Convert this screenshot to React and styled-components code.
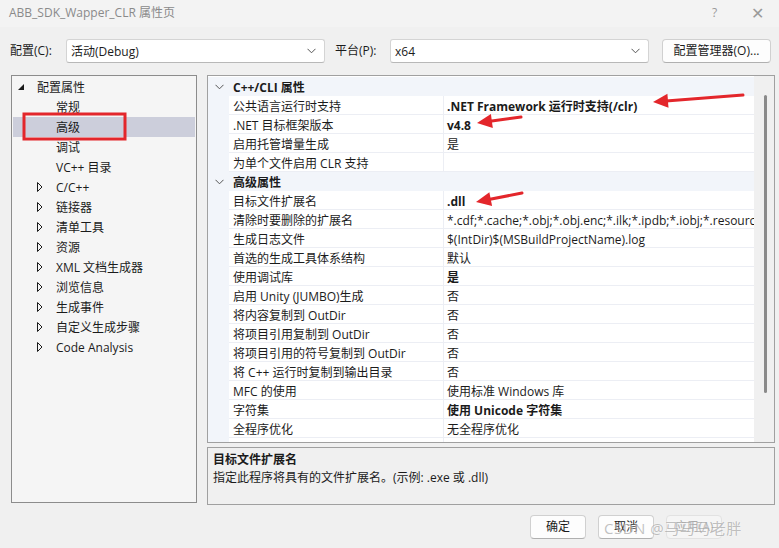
import React from 'react'
import styled, { createGlobalStyle, css } from 'styled-components'

const GlobalStyle = createGlobalStyle`
    html, body {
        margin: 0;
        padding: 0;
        background: #f0f0f0;
    }
    body {
        font-family: 'Segoe UI', 'Open Sans', 'Noto Sans CJK SC', sans-serif;
        font-size: 12px;
        color: #1b1b1b;
    }
`

const Window = styled.div`
    position: relative;
    width: 779px;
    height: 548px;
    background: #f0f0f0;
    overflow: hidden;
`

const TitleBar = styled.div`
    height: 27px;
    display: flex;
    align-items: center;
    padding: 0 0 2px 9px;
    box-sizing: border-box;
    background: #f3f3f3;
    color: #8a8a8a;
    font-size: 12px;
`

const TitleText = styled.div`
    flex: 1;
    line-height: 16px;
`

const TitleButton = styled.div`
    width: 43px;
    text-align: center;
    color: #9a9a9a;
    font-size: ${(p) => (p.$big ? '16px' : '12px')};
    line-height: 16px;
`

const Toolbar = styled.div`
    height: 48px;
    display: flex;
    align-items: center;
    padding-left: 10px;
`

const Label = styled.div`
    width: ${(p) => p.$w}px;
    line-height: 16px;
`

const Combo = styled.div`
    width: 259px;
    height: 24px;
    box-sizing: border-box;
    display: flex;
    align-items: center;
    justify-content: space-between;
    padding: 0 8px 0 4px;
    background: #ffffff;
    border: 1px solid #d4d4d4;
    border-bottom-color: #b8b8b8;
    border-radius: 3px;
    margin-right: ${(p) => p.$mr}px;
`

const Chevron = styled.svg`
    width: 9px;
    height: 6px;
    flex: none;
`

const PushButton = styled.div`
    height: 24px;
    box-sizing: border-box;
    width: ${(p) => p.$w}px;
    display: flex;
    align-items: center;
    justify-content: center;
    border: 1px solid ${(p) => (p.$disabled ? '#e2e2e2' : '#d0d0d0')};
    border-bottom-color: ${(p) => (p.$disabled ? '#e2e2e2' : '#b0b0b0')};
    border-radius: 4px;
    background: ${(p) => (p.$disabled ? '#f5f5f5' : '#fdfdfd')};
    color: ${(p) => (p.$disabled ? '#a8a8a8' : '#1b1b1b')};
    line-height: 16px;
`

const Main = styled.div`
    display: flex;
    gap: 10px;
    padding-left: 11px;
    height: 430px;
`

const Tree = styled.div`
    width: 186px;
    height: 428px;
    box-sizing: border-box;
    border: 1px solid #8c8c8c;
    background: #f5f5f5;
    padding: 1px;
`

const TreeRow = styled.div`
    height: 20px;
    box-sizing: border-box;
    display: flex;
    align-items: center;
    padding: 2px 0 0 ${(p) => 5 + p.$level * 19}px;
    background: ${(p) => (p.$selected ? '#cccedb' : 'transparent')};
`

const Expander = styled.div`
    width: 19px;
    flex: none;
    display: flex;
    align-items: center;
    margin-top: -2px;
`

const TreeLabel = styled.div`
    line-height: 16px;
    white-space: nowrap;
`

const RightCol = styled.div`
    width: 568px;
    display: flex;
    flex-direction: column;
    gap: 4px;
`

const Grid = styled.div`
    height: 368px;
    box-sizing: border-box;
    border: 1px solid #a0a0a0;
    display: flex;
    overflow: hidden;
    background: #ffffff;
`

const Rows = styled.div`
    flex: 1;
    padding-top: 1px;
    overflow: hidden;
`

const Row = styled.div`
    height: 19px;
    box-sizing: border-box;
    display: grid;
    grid-template-columns: 21px 215px 1fr;
    grid-template-rows: 19px;
    ${(p) =>
        p.$category
            ? css`
                  background: #f2f5fa;
              `
            : css`
                  background: #ffffff;
              `}
`

const Gutter = styled.div`
    background: #f2f5fa;
    display: flex;
    align-items: center;
    justify-content: center;
    padding-left: 2px;
`

const CategoryText = styled.div`
    grid-column: 2 / 4;
    padding: 3px 0 0 4px;
    font-weight: 700;
    line-height: 16px;
`

const NameCell = styled.div`
    padding: 3px 0 0 4px;
    box-sizing: border-box;
    border-right: 1px solid #eceef4;
    border-bottom: 1px solid #eceef4;
    line-height: 15px;
    white-space: nowrap;
    overflow: hidden;
`

const ValueCell = styled.div`
    padding: 3px 0 0 3px;
    box-sizing: border-box;
    border-bottom: 1px solid #eceef4;
    line-height: 15px;
    white-space: nowrap;
    overflow: hidden;
    font-weight: ${(p) => (p.$bold ? 700 : 400)};
`

const ScrollTrack = styled.div`
    width: 20px;
    flex: none;
    background: #f0f0f0;
    padding-top: 19px;
    display: flex;
    justify-content: center;
    box-sizing: border-box;
`

const ScrollThumb = styled.div`
    width: 3px;
    height: 298px;
    margin-left: 2px;
    border-radius: 2px;
    background: #8a8a8a;
`

const Desc = styled.div`
    height: 58px;
    box-sizing: border-box;
    border: 1px solid #a0a0a0;
    background: #f0f0f0;
    padding: 3px 5px;
`

const DescTitle = styled.div`
    font-weight: 700;
    line-height: 18px;
`

const DescText = styled.div`
    line-height: 18px;
`

const Footer = styled.div`
    display: flex;
    justify-content: flex-end;
    gap: 12px;
    padding: 10px 57px 0 0;
`

const Overlay = styled.svg`
    position: absolute;
    top: 0;
    left: 0;
    width: 779px;
    height: 548px;
    pointer-events: none;
`

const Watermark = styled.div`
    position: absolute;
    left: 604px;
    top: 518px;
    font-size: 15px;
    line-height: 20px;
    color: rgba(140, 140, 140, 0.55);
    text-shadow: 0 0 2px rgba(255, 255, 255, 0.9);
    white-space: nowrap;
    letter-spacing: 0.5px;
    pointer-events: none;
`

const tree = [
    { label: '配置属性', level: 0, open: true },
    { label: '常规', level: 1 },
    { label: '高级', level: 1, selected: true },
    { label: '调试', level: 1 },
    { label: 'VC++ 目录', level: 1 },
    { label: 'C/C++', level: 1, closed: true },
    { label: '链接器', level: 1, closed: true },
    { label: '清单工具', level: 1, closed: true },
    { label: '资源', level: 1, closed: true },
    { label: 'XML 文档生成器', level: 1, closed: true },
    { label: '浏览信息', level: 1, closed: true },
    { label: '生成事件', level: 1, closed: true },
    { label: '自定义生成步骤', level: 1, closed: true },
    { label: 'Code Analysis', level: 1, closed: true },
]

const rows = [
    { cat: 'C++/CLI 属性' },
    { name: '公共语言运行时支持', value: '.NET Framework 运行时支持(/clr)', bold: true },
    { name: '.NET 目标框架版本', value: 'v4.8', bold: true },
    { name: '启用托管增量生成', value: '是' },
    { name: '为单个文件启用 CLR 支持', value: '' },
    { cat: '高级属性' },
    { name: '目标文件扩展名', value: '.dll', bold: true },
    { name: '清除时要删除的扩展名', value: '*.cdf;*.cache;*.obj;*.obj.enc;*.ilk;*.ipdb;*.iobj;*.resources;*.tlb;*.tli;*.tlh;*.tmp' },
    { name: '生成日志文件', value: '$(IntDir)$(MSBuildProjectName).log' },
    { name: '首选的生成工具体系结构', value: '默认' },
    { name: '使用调试库', value: '是', bold: true },
    { name: '启用 Unity (JUMBO)生成', value: '否' },
    { name: '将内容复制到 OutDir', value: '否' },
    { name: '将项目引用复制到 OutDir', value: '否' },
    { name: '将项目引用的符号复制到 OutDir', value: '否' },
    { name: '将 C++ 运行时复制到输出目录', value: '否' },
    { name: 'MFC 的使用', value: '使用标准 Windows 库' },
    { name: '字符集', value: '使用 Unicode 字符集', bold: true },
    { name: '全程序优化', value: '无全程序优化' },
    { name: '', value: '' },
]

const arrows = [
    { from: [743, 95], to: [653, 102] },
    { from: [521, 117], to: [477, 123] },
    { from: [522, 193], to: [476, 202] },
]

// arrow head polygon from tail/tip
const head = (from, to, len = 15, half = 7) => {
    const dx = to[0] - from[0]
    const dy = to[1] - from[1]
    const d = Math.hypot(dx, dy)
    const ux = dx / d
    const uy = dy / d
    const bx = to[0] - ux * len
    const by = to[1] - uy * len
    return {
        points: `${to[0]},${to[1]} ${bx - uy * half},${by + ux * half} ${bx + uy * half},${by - ux * half}`,
        base: [bx + ux * 2, by + uy * 2],
    }
}

const DownChevron = () => (
    <Chevron viewBox="0 0 9 6">
        <path d="M0.5 0.8 L4.5 4.8 L8.5 0.8" fill="none" stroke="#555" strokeWidth="1" />
    </Chevron>
)

const App = () => {
    return (
        <Window>
            <GlobalStyle />
            <TitleBar>
                <TitleText>ABB_SDK_Wapper_CLR 属性页</TitleText>
                <TitleButton>?</TitleButton>
                <TitleButton $big>✕</TitleButton>
            </TitleBar>
            <Toolbar>
                <Label $w={56}>配置(C):</Label>
                <Combo $mr={10}>
                    <span>活动(Debug)</span>
                    <DownChevron />
                </Combo>
                <Label $w={55}>平台(P):</Label>
                <Combo $mr={13}>
                    <span>x64</span>
                    <DownChevron />
                </Combo>
                <PushButton $w={109}>配置管理器(O)...</PushButton>
            </Toolbar>
            <Main>
                <Tree>
                    {tree.map((t) => (
                        <TreeRow key={t.label} $level={t.level} $selected={t.selected}>
                            <Expander>
                                {t.open && (
                                    <svg width="6" height="6" viewBox="0 0 6 6">
                                        <polygon points="6,0 6,6 0,6" fill="#1b1b1b" />
                                    </svg>
                                )}
                                {t.closed && (
                                    <svg width="6" height="10" viewBox="0 0 6 10">
                                        <polygon points="0.5,0.5 5,5 0.5,9.5" fill="none" stroke="#1b1b1b" strokeWidth="1" />
                                    </svg>
                                )}
                            </Expander>
                            <TreeLabel>{t.label}</TreeLabel>
                        </TreeRow>
                    ))}
                </Tree>
                <RightCol>
                    <Grid>
                        <Rows>
                            {rows.map((r, i) =>
                                r.cat ? (
                                    <Row key={i} $category>
                                        <Gutter>
                                            <DownChevron />
                                        </Gutter>
                                        <CategoryText>{r.cat}</CategoryText>
                                    </Row>
                                ) : (
                                    <Row key={i}>
                                        <Gutter />
                                        <NameCell>{r.name}</NameCell>
                                        <ValueCell $bold={r.bold}>{r.value}</ValueCell>
                                    </Row>
                                )
                            )}
                        </Rows>
                        <ScrollTrack>
                            <ScrollThumb />
                        </ScrollTrack>
                    </Grid>
                    <Desc>
                        <DescTitle>目标文件扩展名</DescTitle>
                        <DescText>指定此程序将具有的文件扩展名。(示例: .exe 或 .dll)</DescText>
                    </Desc>
                </RightCol>
            </Main>
            <Footer>
                <PushButton $w={56}>确定</PushButton>
                <PushButton $w={56}>取消</PushButton>
                <PushButton $w={56} $disabled>
                    应用(A)
                </PushButton>
            </Footer>
            <Overlay viewBox="0 0 779 548">
                <rect x="24" y="114" width="101" height="25" fill="none" stroke="#e3262b" strokeWidth="3" />
                {arrows.map((a, i) => {
                    const h = head(a.from, a.to)
                    return (
                        <g key={i}>
                            <line
                                x1={a.from[0]}
                                y1={a.from[1]}
                                x2={h.base[0]}
                                y2={h.base[1]}
                                stroke="#e3262b"
                                strokeWidth="3"
                                strokeLinecap="round"
                            />
                            <polygon points={h.points} fill="#e3262b" />
                        </g>
                    )
                })}
            </Overlay>
            <Watermark>CSDN @马马马老胖</Watermark>
        </Window>
    )
}

export default App
